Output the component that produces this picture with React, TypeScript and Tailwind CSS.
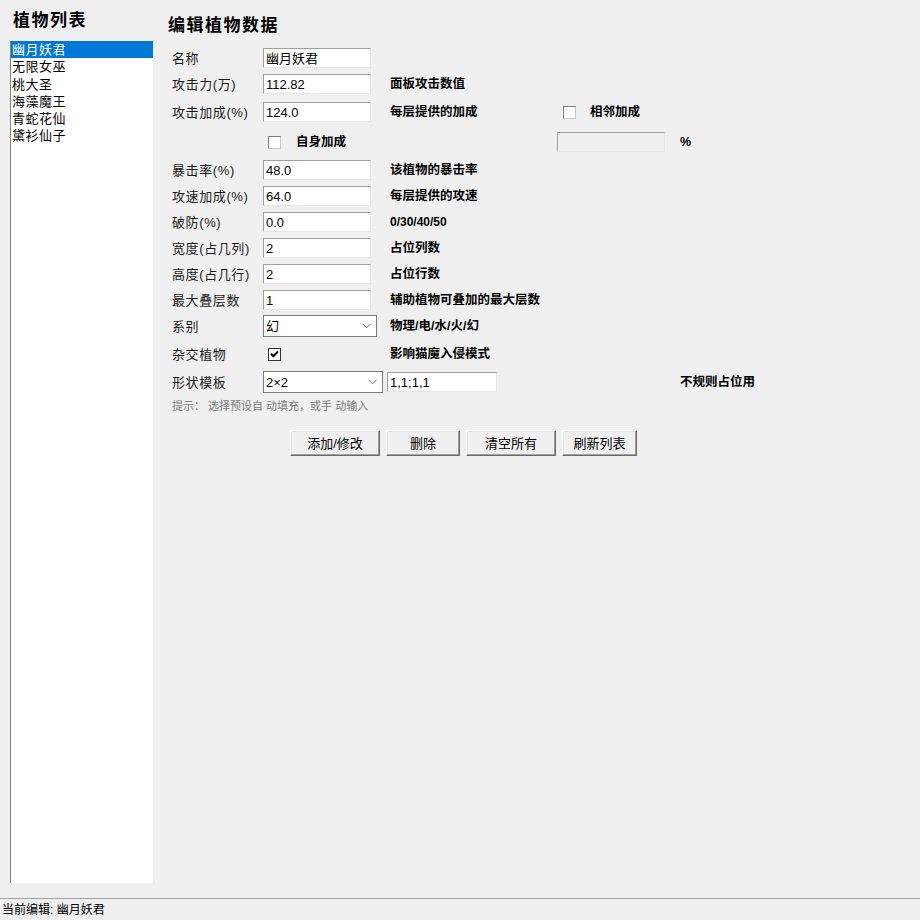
import React from "react";

const FONT = "font-['Liberation_Sans','Noto_Sans_CJK_SC',sans-serif]";

function Field({ value, className = "w-[108px]", disabled = false }: { value?: string; className?: string; disabled?: boolean }) {
  return (
    <div
      className={`${className} h-[20px] border border-t-[#a0a0a0] border-l-[#a0a0a0] border-r-[#e6e6e6] border-b-[#e6e6e6] ${
        disabled ? "bg-[#f0f0f0]" : "bg-white"
      } flex items-center pl-[2px] text-[13px] text-black leading-none`}
    >
      {value}
    </div>
  );
}

function Combo({ value, className }: { value: string; className: string }) {
  return (
    <div
      className={`${className} h-[22px] bg-white border border-[#7a7a7a] flex items-center justify-between pl-[2px] pr-[5px] text-[13px] leading-none`}
    >
      <span>{value}</span>
      <svg width="9" height="6" viewBox="0 0 9 6">
        <polyline points="0.5,0.8 4.5,4.8 8.5,0.8" fill="none" stroke="#606060" strokeWidth="1" />
      </svg>
    </div>
  );
}

function Check({ checked = false }: { checked?: boolean }) {
  return (
    <div
      className={`w-[13px] h-[13px] bg-white border ${
        checked ? "border-[#333333]" : "border-t-[#7a7a7a] border-l-[#7a7a7a] border-r-[#c8c8c8] border-b-[#c8c8c8]"
      } flex items-center justify-center`}
    >
      {checked && (
        <svg width="9" height="8" viewBox="0 0 9 8">
          <polyline points="1,3.8 3.4,6.2 8,1.4" fill="none" stroke="#000" strokeWidth="2" />
        </svg>
      )}
    </div>
  );
}

function Desc({ children, className = "" }: { children: React.ReactNode; className?: string }) {
  return <div className={`text-[12.5px] font-bold text-black leading-none whitespace-nowrap ${className}`}>{children}</div>;
}

function Label({ children }: { children: React.ReactNode }) {
  return <div className="w-[95px] shrink-0 pl-[4px] text-[13px] tracking-[0.6px] text-[#1a1a1a] leading-none whitespace-nowrap">{children}</div>;
}

function Row({ h, children }: { h: string; children: React.ReactNode }) {
  return <div className={`flex items-center ${h}`}>{children}</div>;
}

function Btn({ children, className }: { children: React.ReactNode; className: string }) {
  return (
    <div
      className={`${className} h-[26px] flex items-center justify-center bg-[#f0f0f0] border border-t-white border-l-white border-r-[#696969] border-b-[#696969] shadow-[inset_-1px_-1px_0_#a0a0a0,inset_1px_1px_0_#e3e3e3] text-[13px] leading-none`}
    >
      {children}
    </div>
  );
}

const plants = ["幽月妖君", "无限女巫", "桃大圣", "海藻魔王", "青蛇花仙", "黛衫仙子"];

export default function App() {
  return (
    <div className={`${FONT} w-[920px] h-[920px] bg-[#f0f0f0] flex flex-col text-black overflow-hidden`}>
      <div className="flex flex-1 min-h-0">
        {/* left list */}
        <div className="w-[153px] shrink-0 pl-[10px] pb-[15px] flex flex-col">
          <div className="h-[41px] flex items-center pl-[3px] text-[17px] font-bold tracking-[1.5px] leading-none">植物列表</div>
          <div className="flex-1 bg-white border-l border-[#828282]">
            {plants.map((p, i) => (
              <div
                key={p}
                className={`h-[17.3px] leading-[17.3px] text-[13px] tracking-[0.5px] pl-[1px] ${i === 0 ? "bg-[#0078d7] text-white" : "text-black"}`}
              >
                {p}
              </div>
            ))}
          </div>
        </div>

        {/* right form */}
        <div className="flex-1 pl-[15px] flex flex-col">
          <div className="h-[45px] pt-[6px] flex items-center text-[17px] font-bold tracking-[1.5px] leading-none">编辑植物数据</div>

          <Row h="h-[26px]">
            <Label>名称</Label>
            <Field value="幽月妖君" />
          </Row>
          <Row h="h-[26px]">
            <Label>攻击力(万)</Label>
            <div className="w-[127px] shrink-0">
              <Field value="112.82" />
            </div>
            <Desc>面板攻击数值</Desc>
          </Row>
          <Row h="h-[30px]">
            <Label>攻击加成(%)</Label>
            <div className="w-[127px] shrink-0">
              <Field value="124.0" />
            </div>
            <Desc className="w-[173px]">每层提供的加成</Desc>
            <Check />
            <Desc className="ml-[14px]">相邻加成</Desc>
          </Row>
          <Row h="h-[30px]">
            <div className="w-[100px] shrink-0" />
            <Check />
            <Desc className="ml-[15px] w-[261px]">自身加成</Desc>
            <Field className="w-[108px]" disabled />
            <Desc className="ml-[15px] text-[11px]">%</Desc>
          </Row>
          <Row h="h-[26px]">
            <Label>暴击率(%)</Label>
            <div className="w-[127px] shrink-0">
              <Field value="48.0" />
            </div>
            <Desc>该植物的暴击率</Desc>
          </Row>
          <Row h="h-[26px]">
            <Label>攻速加成(%)</Label>
            <div className="w-[127px] shrink-0">
              <Field value="64.0" />
            </div>
            <Desc>每层提供的攻速</Desc>
          </Row>
          <Row h="h-[26px]">
            <Label>破防(%)</Label>
            <div className="w-[127px] shrink-0">
              <Field value="0.0" />
            </div>
            <Desc className="text-[12px]">0/30/40/50</Desc>
          </Row>
          <Row h="h-[26px]">
            <Label>宽度(占几列)</Label>
            <div className="w-[127px] shrink-0">
              <Field value="2" />
            </div>
            <Desc>占位列数</Desc>
          </Row>
          <Row h="h-[26px]">
            <Label>高度(占几行)</Label>
            <div className="w-[127px] shrink-0">
              <Field value="2" />
            </div>
            <Desc>占位行数</Desc>
          </Row>
          <Row h="h-[26px]">
            <Label>最大叠层数</Label>
            <div className="w-[127px] shrink-0">
              <Field value="1" />
            </div>
            <Desc>辅助植物可叠加的最大层数</Desc>
          </Row>
          <Row h="h-[26px]">
            <Label>系别</Label>
            <div className="w-[127px] shrink-0">
              <Combo value="幻" className="w-[114px]" />
            </div>
            <Desc>物理/电/水/火/幻</Desc>
          </Row>
          <Row h="h-[30px]">
            <Label>杂交植物</Label>
            <div className="w-[127px] shrink-0 pl-[5px]">
              <Check checked />
            </div>
            <Desc>影响猫魔入侵模式</Desc>
          </Row>
          <Row h="h-[26px]">
            <Label>形状模板</Label>
            <Combo value="2×2" className="w-[120px] shrink-0" />
            <Field value="1,1;1,1" className="ml-[4px] w-[110px] shrink-0" />
            <Desc className="ml-[183px]">不规则占位用</Desc>
          </Row>
          <Row h="h-[22px]">
            <div className="pl-[4px] text-[11px] text-[#7a7a7a] leading-none whitespace-nowrap">提示： 选择预设自 动填充，或手 动输入</div>
          </Row>
          <div className="flex mt-[13px] ml-[122px] gap-[6px]">
            <Btn className="w-[90px]">添加/修改</Btn>
            <Btn className="w-[74px]">删除</Btn>
            <Btn className="w-[90px]">清空所有</Btn>
            <Btn className="w-[75px]">刷新列表</Btn>
          </div>
        </div>
      </div>
      <div className="h-[22px] shrink-0 border-t border-[#a0a0a0] flex items-center pl-[2px] text-[12px] leading-none">当前编辑: 幽月妖君</div>
    </div>
  );
}
